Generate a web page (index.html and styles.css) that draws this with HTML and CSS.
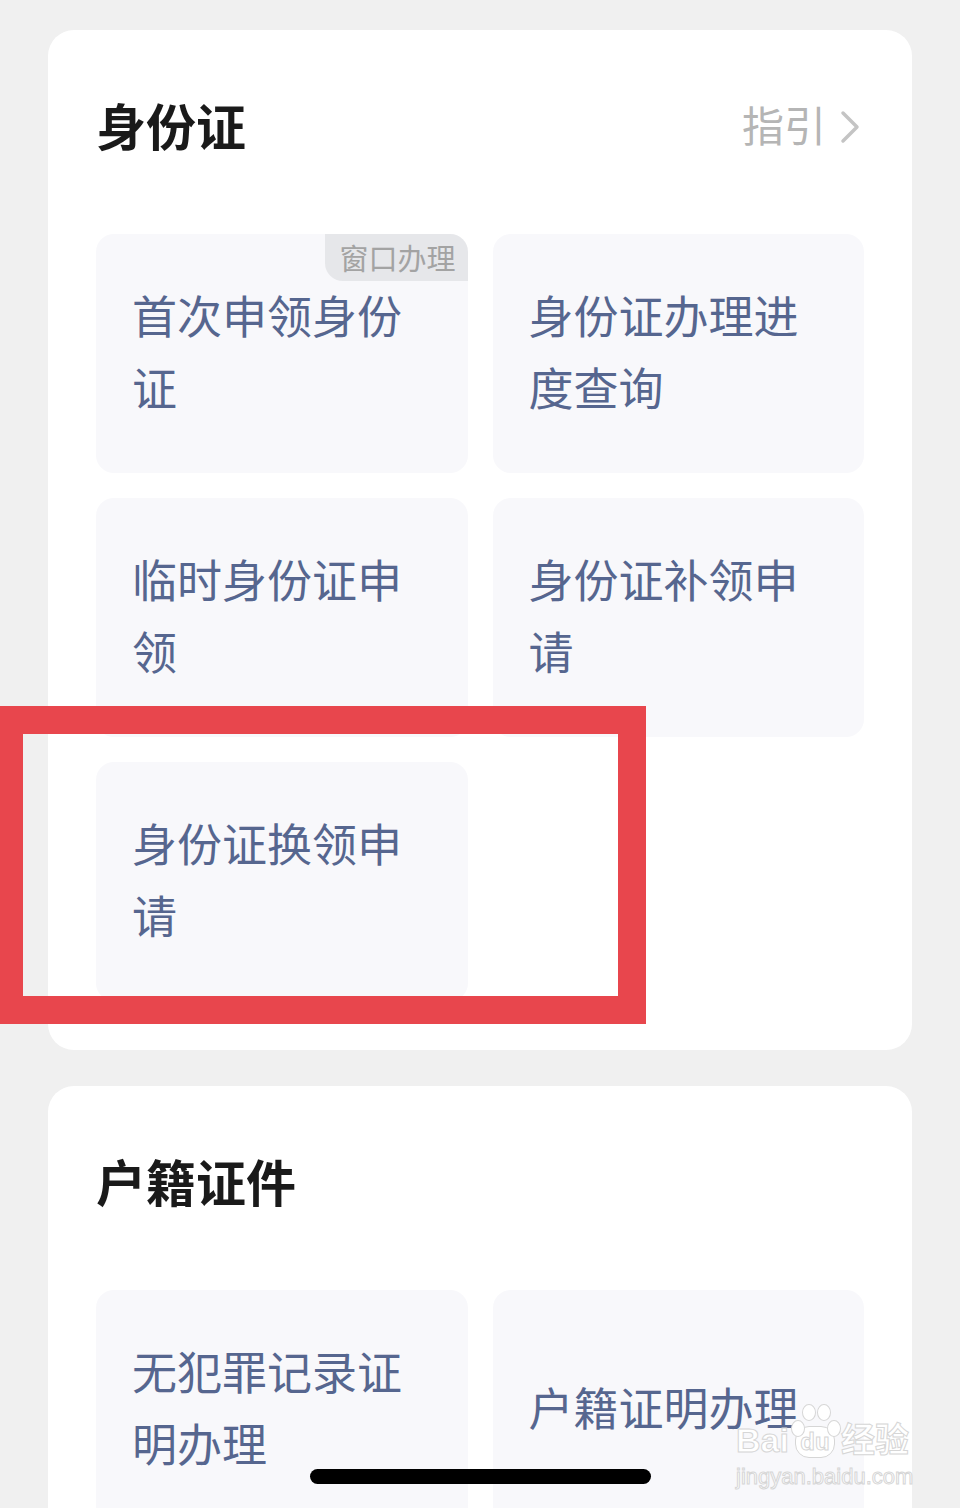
FILE: index.html
```html
<!DOCTYPE html>
<html lang="zh-CN">

<head>
    <meta charset="UTF-8" />
    <meta name="viewport" content="width=device-width, initial-scale=1.0">
    <title>证件办理</title>
    <link rel="stylesheet" href="styles.css">
</head>

<body>
    <div class="page">
        <section class="card">
            <div class="card-head">
                <h2>身份证</h2>
                <a class="guide" href="#">指引
                    <svg width="20" height="34" viewBox="0 0 20 34"><polyline points="3,3 17,17 3,31" fill="none" stroke="#c4c4c4" stroke-width="3.5" stroke-linecap="round" stroke-linejoin="round"/></svg>
                </a>
            </div>
            <div class="tiles">
                <div class="tile">
                    <span class="badge">窗口办理</span>
                    <p>首次申领身份证</p>
                </div>
                <div class="tile"><p>身份证办理进度查询</p></div>
                <div class="tile"><p>临时身份证申领</p></div>
                <div class="tile"><p>身份证补领申请</p></div>
                <div class="tile"><p>身份证换领申请</p></div>
            </div>
        </section>

        <section class="card">
            <div class="card-head">
                <h2>户籍证件</h2>
            </div>
            <div class="tiles">
                <div class="tile"><p>无犯罪记录证明办理</p></div>
                <div class="tile"><p>户籍证明办理</p></div>
            </div>
        </section>

        <!-- annotation frame -->
        <div class="mark"></div>
    </div>

    <div class="watermark">
        <div class="wm-logo">
            <span>Bai</span>
            <span class="paw">
                <i class="toe t1"></i><i class="toe t2"></i><i class="toe t3"></i><i class="toe t4"></i>
                <b>du</b>
            </span>
            <span>经验</span>
        </div>
        <div class="wm-url">jingyan.baidu.com</div>
    </div>

    <div class="home-bar"></div>
</body>

</html>
```

FILE: styles.css
```css
body {
    font-family: "Noto Sans CJK SC", "Noto Sans", sans-serif;
    background-color: #f0f0f0;
    margin: 0;
    padding: 0;
    overflow: hidden;
    height: 1508px;
}

.page {
    position: relative;
    padding: 30px 48px 0;
    display: flex;
    flex-direction: column;
    gap: 36px;
}

.card {
    background: #fff;
    border-radius: 26px;
    padding: 62px 48px 49px;
}

.card-head {
    display: flex;
    align-items: center;
    justify-content: space-between;
    height: 70px;
    margin-bottom: 72px;
}

.card-head h2 {
    margin: 0 0 6px;
    font-size: 50px;
    font-weight: 700;
    color: #1a1a1a;
    line-height: 70px;
}

.guide {
    display: flex;
    align-items: center;
    gap: 14px;
    font-size: 42px;
    line-height: 60px;
    color: #b5b5b5;
    text-decoration: none;
    margin: 0 4px 6px 0;
}

.guide svg {
    margin-top: 6px;
}

.tiles {
    display: grid;
    grid-template-columns: 1fr 1fr;
    grid-auto-rows: 239px;
    gap: 25px;
}

.tile {
    position: relative;
    background-color: #f8f8fb;
    border-radius: 18px;
    padding: 0 50px 6px 36px;
    display: flex;
    align-items: center;
}

.tile p {
    margin: 0;
    font-size: 45px;
    line-height: 72px;
    color: #56668f;
}

.badge {
    position: absolute;
    top: 0;
    right: 0;
    background-color: #e6e7ea;
    color: #a3a3a3;
    font-size: 29px;
    line-height: 47px;
    padding: 0 12px 0 14px;
    border-radius: 0 18px 0 18px;
}

.mark {
    position: absolute;
    left: 0;
    top: 706px;
    width: 595px;
    height: 262px;
    border: 28px solid #e8464d;
    border-left-width: 23px;
}

.watermark {
    position: absolute;
    left: 736px;
    top: 1400px;
    color: #fff;
    -webkit-text-stroke: 1px #d6d6d6;
    font-family: "Liberation Sans", "Noto Sans CJK SC", sans-serif;
}

.wm-logo {
    display: flex;
    align-items: flex-end;
    font-size: 34px;
    font-weight: 700;
    line-height: 36px;
    gap: 2px;
}

.paw {
    position: relative;
    width: 48px;
    height: 58px;
    display: flex;
    align-items: flex-end;
    justify-content: center;
}

.paw b {
    font-size: 24px;
    line-height: 30px;
    border: 1px solid #d6d6d6;
    border-radius: 14px;
    padding: 0 4px;
    background: #fff;
}

.toe {
    position: absolute;
    width: 12px;
    height: 15px;
    border: 1px solid #d6d6d6;
    border-radius: 50%;
    background: #fff;
}

.t1 { left: 0; top: 20px; }
.t2 { left: 11px; top: 4px; }
.t3 { left: 26px; top: 4px; }
.t4 { left: 36px; top: 20px; }

.wm-url {
    font-size: 22px;
    line-height: 30px;
    margin-top: 4px;
}

.home-bar {
    position: absolute;
    left: 310px;
    top: 1469px;
    width: 341px;
    height: 15px;
    border-radius: 8px;
    background: #000;
}
```
